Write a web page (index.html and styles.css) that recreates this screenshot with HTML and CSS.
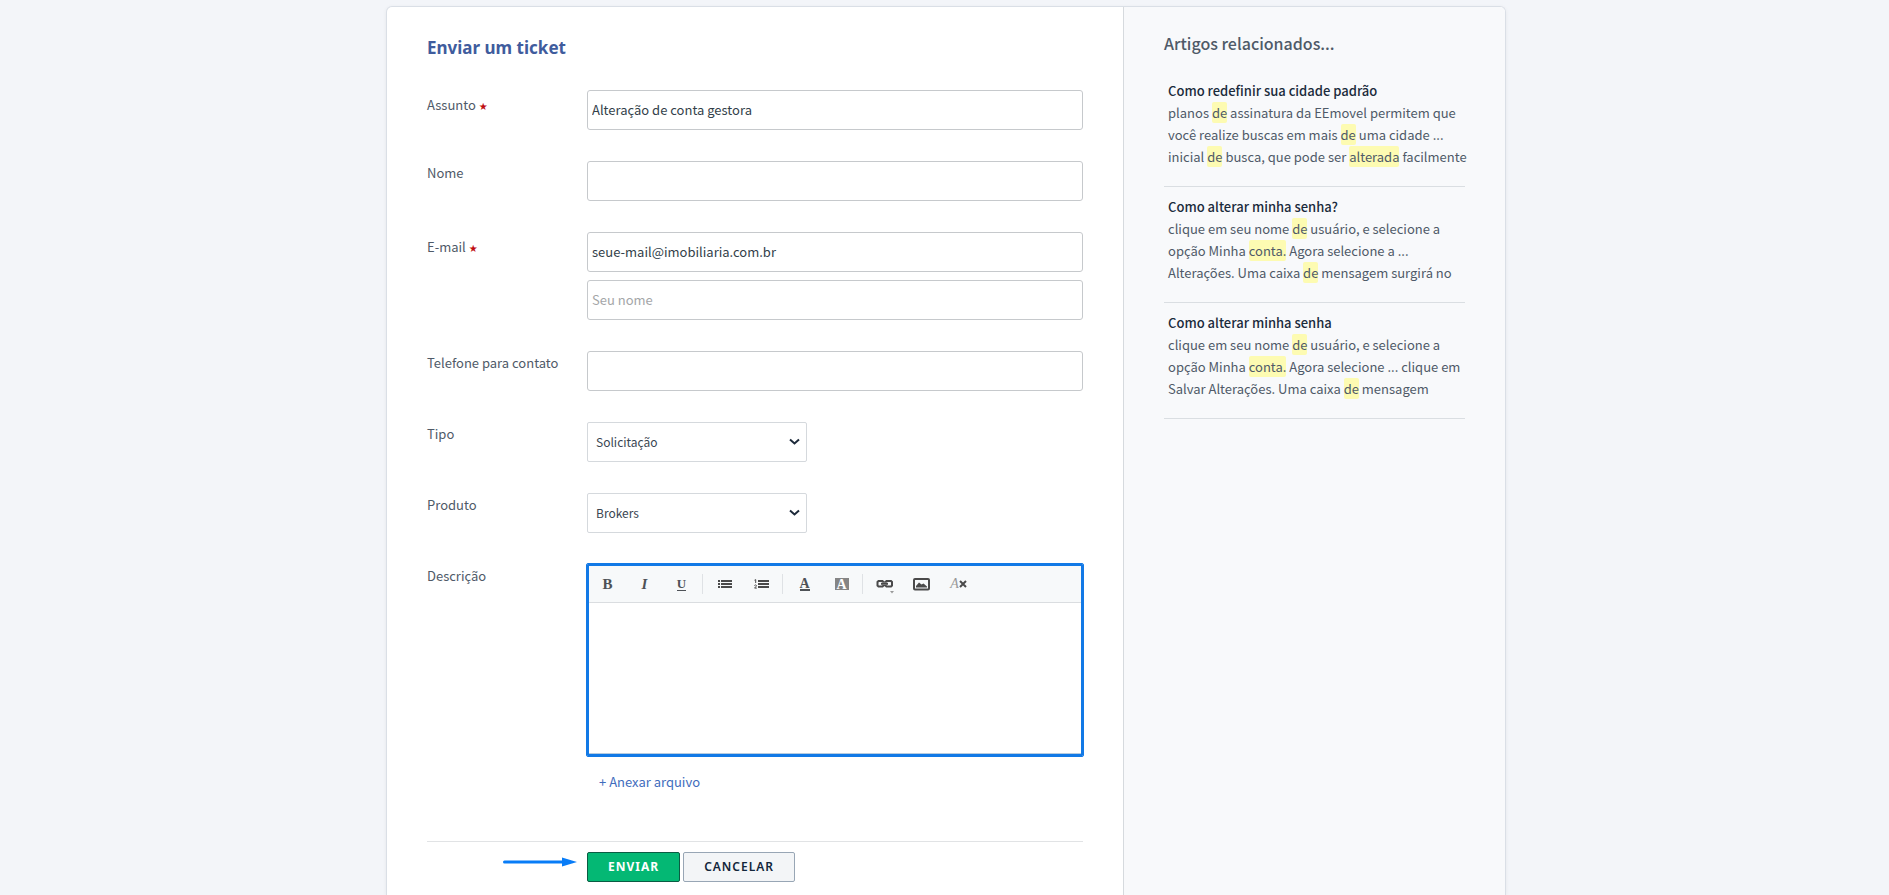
FILE: index.html
```html
<!DOCTYPE html>
<html lang="pt-BR">
<head>
<meta charset="utf-8">
<title>Enviar um ticket</title>
<meta name="viewport" content="width=device-width, initial-scale=1">
<link rel="stylesheet" href="styles.css">
</head>
<body>
<div class="card">
  <main class="main">
    <h1 class="title">Enviar um ticket</h1>
    <form class="form">
      <div class="row">
        <label class="label label-required" for="subject">Assunto <span class="star">★</span></label>
        <input class="input" id="subject" type="text" value="Alteração de conta gestora">
      </div>
      <div class="row">
        <label class="label" for="name">Nome</label>
        <input class="input" id="name" type="text">
      </div>
      <div class="row">
        <label class="label label-required" for="email">E-mail <span class="star">★</span></label>
        <div class="stack">
          <input class="input" id="email" type="text" value="seue-mail@imobiliaria.com.br">
          <input class="input" type="text" placeholder="Seu nome" aria-label="Seu nome">
        </div>
      </div>
      <div class="row">
        <label class="label" for="phone">Telefone para contato</label>
        <input class="input" id="phone" type="text">
      </div>
      <div class="row">
        <label class="label" for="type">Tipo</label>
        <div class="select-box">
          <select class="select" id="type"><option>Solicitação</option></select>
          <svg class="chevron" width="11" height="8" viewBox="0 0 11 8"><path d="M1 1.5 5.500 5.500 10 1.5"/></svg>
        </div>
      </div>
      <div class="row">
        <label class="label" for="product">Produto</label>
        <div class="select-box">
          <select class="select" id="product"><option>Brokers</option></select>
          <svg class="chevron" width="11" height="8" viewBox="0 0 11 8"><path d="M1 1.5 5.500 5.500 10 1.5"/></svg>
        </div>
      </div>
      <div class="row">
        <label class="label" for="description">Descrição</label>
        <div class="description">
          <div class="editor">
            <div class="toolbar">
              <button class="tool tool-bold" type="button">B</button>
              <button class="tool tool-italic" type="button">I</button>
              <button class="tool tool-underline" type="button"><span class="underlined">U</span></button>
              <span class="divider"></span>
              <button class="tool" type="button" aria-label="Lista"><svg width="14" height="10" viewBox="0 0 14 10"><path d="M0 1h2v2H0zM0 4h2v2H0zM0 7h2v2H0zM3 1h11v2H3zM3 4h11v2H3zM3 7h11v2H3z"/></svg></button>
              <button class="tool" type="button" aria-label="Lista numerada"><svg width="16" height="10" viewBox="0 0 16 10"><path d="M4 1h11v2H4zM4 4h11v2H4zM4 7h11v2H4z"/><path class="thin" d="M.5 1.2 1.7.6V4M.4 6.5Q1.5 5.4 2.4 6.4 2.6 7 .6 9.1H2.8"/></svg></button>
              <span class="divider"></span>
              <button class="tool" type="button"><span class="text-color">A</span></button>
              <button class="tool" type="button"><span class="back-color">A</span></button>
              <span class="divider"></span>
              <button class="tool" type="button" aria-label="Link"><svg width="18" height="20" viewBox="0 0 18 20"><path class="line" d="M7.500 8.500V8L6.500 7H2.500L1.500 8v3.500l1 1h4l1-1V11M9.500 8.500V8l1-1h4.500l1 1v3.500l-1 1H10.500l-1-1V11M5 9.800h7"/><path class="light" d="M14 17h4l-2 2.500z"/></svg></button>
              <button class="tool" type="button" aria-label="Imagem"><svg width="17" height="13" viewBox="0 0 17 13"><rect class="line" x="1" y="1" width="15" height="10.500" rx="1"/><path d="M3 9.500V8l3-3.500 2.500 2 2-1L14 8.500v1z"/></svg></button>
              <button class="tool tool-clear" type="button"><span class="clear-letter">A</span><svg width="8" height="8" viewBox="0 0 8 8"><path class="cross" d="M1 1 7 7M7 1 1 7"/></svg></button>
            </div>
            <textarea class="textarea" id="description"></textarea>
          </div>
          <a class="attach" href="#">+ Anexar arquivo</a>
        </div>
      </div>
      <div class="actions">
        <div class="pointer"><svg width="74" height="10" viewBox="0 0 74 10"><path d="M1.500 3.500H59V.5L74 5 59 9.500V6.500H1.500a1.500 1.500 0 0 1 0-3z"/></svg></div>
        <button class="button button-primary" type="submit">ENVIAR</button>
        <button class="button" type="button">CANCELAR</button>
      </div>
    </form>
  </main>
  <aside class="side">
    <h2 class="side-title">Artigos relacionados...</h2>
    <article class="article">
      <h3 class="article-title">Como redefinir sua cidade padrão</h3>
      <p class="text">planos <mark>de</mark> assinatura da EEmovel permitem que<br>você realize buscas em mais <mark>de</mark> uma cidade ...<br>inicial <mark>de</mark> busca, que pode ser <mark>alterada</mark> facilmente</p>
    </article>
    <article class="article">
      <h3 class="article-title">Como alterar minha senha?</h3>
      <p class="text">clique em seu nome <mark>de</mark> usuário, e selecione a<br>opção Minha <mark>conta.</mark> Agora selecione a ...<br>Alterações. Uma caixa <mark>de</mark> mensagem surgirá no</p>
    </article>
    <article class="article">
      <h3 class="article-title">Como alterar minha senha</h3>
      <p class="text">clique em seu nome <mark>de</mark> usuário, e selecione a<br>opção Minha <mark>conta.</mark> Agora selecione ... clique em<br>Salvar Alterações. Uma caixa <mark>de</mark> mensagem</p>
    </article>
  </aside>
</div>
</body>
</html>
```
FILE: styles.css
```css
* { box-sizing: border-box; }

body {
  margin: 0;
  min-height: 100vh;
  padding: 6px 0 0 3px;
  display: flex;
  justify-content: center;
  background: #f3f5f9;
  color: #4f5a68;
  font-family: "Noto Sans CJK SC", "Noto Sans", sans-serif;
  font-size: 13px;
  line-height: 22px;
}

h1, h2, h3, p { margin: 0; }
button, input, select, textarea { font: inherit; color: inherit; }

.card {
  width: 100%;
  max-width: 1120px;
  display: flex;
  background: #fff;
  border: 1px solid #dadfe6;
  border-bottom: 0;
  border-radius: 6px 6px 0 0;
  box-shadow: 0 1px 4px rgba(0, 0, 0, 0.06);
  overflow: hidden;
}

.main { flex: 1; min-width: 0; padding: 28px 40px 12px; }

.title {
  margin-bottom: 29px;
  color: #3f5c9d;
  font-family: "Noto Sans", sans-serif;
  font-size: 17px;
  font-weight: 700;
  line-height: 26px;
}

.form { display: flex; flex-direction: column; gap: 31px; }
.row { display: grid; grid-template-columns: 160px 1fr; }
.label { padding-top: 1px; }
.label-required { padding-top: 4px; }
.star { color: #c00d12; font-family: "DejaVu Sans", sans-serif; font-size: 10px; }

.input {
  width: 100%;
  height: 40px;
  padding: 0 4px 2px;
  border: 1px solid #c6c9cc;
  border-radius: 3px;
  background: #fff;
  color: #333f4a;
}
.input::placeholder { color: #a4a6a8; opacity: 1; }
.stack { display: flex; flex-direction: column; gap: 8px; }

.select-box { position: relative; width: 220px; }
.select {
  display: block;
  width: 100%;
  height: 40px;
  padding: 0 8px 1px;
  border: 1px solid #d5d9dd;
  border-radius: 2px;
  background: #fff;
  appearance: none;
  color: #3a4652;
  font-size: 12px;
}
.chevron {
  position: absolute;
  top: 16px;
  right: 7px;
  fill: none;
  stroke: #1d2a3a;
  stroke-width: 2;
  pointer-events: none;
}

.description { display: flex; flex-direction: column; align-items: flex-start; }
.editor { width: 100%; border: 2px solid #1279e6; outline: 1px solid #1279e6; border-radius: 1px; }
.toolbar {
  height: 37px;
  display: flex;
  align-items: center;
  background: #f7f9fa;
  border-bottom: 1px solid #dadde0;
}
.tool {
  width: 37px;
  height: 30px;
  padding: 0;
  display: flex;
  align-items: center;
  justify-content: center;
  border: 0;
  background: none;
  color: #4e5257;
  font-family: "Liberation Serif", serif;
  font-size: 15px;
  line-height: 16px;
}
.tool svg { fill: #4a4a4a; }
.tool .line, .tool .thin, .tool .cross { fill: none; stroke: #4a4a4a; stroke-width: 2; }
.tool .thin { stroke-width: 1; }
.tool .light { fill: #999; }
.tool-bold { font-weight: 700; }
.tool-italic { font-weight: 700; font-style: italic; }
.underlined { border-bottom: 1px solid #4e5257; line-height: 12px; font-size: 13px; font-weight: 700; }
.text-color { width: 10px; border-bottom: 2px solid #4e5257; font-size: 14px; font-weight: 700; line-height: 11px; }
.back-color { width: 14px; height: 12px; background: #858585; color: #fff; font-size: 14px; font-weight: 700; line-height: 13px; }
.clear-letter { color: #999; font-size: 14px; font-style: italic; }
.divider { width: 1px; height: 20px; margin: 0 3px 0 2px; background: #dfe2e5; }
.textarea {
  display: block;
  width: 100%;
  height: 151px;
  padding: 8px;
  border: 0;
  border-bottom: 1px solid #b5cbe0;
  outline: 0;
  resize: none;
}
.attach { margin: 15px 0 0 12px; color: #3f6dbd; text-decoration: none; }

.actions {
  display: flex;
  gap: 3px;
  margin-top: 17px;
  padding-top: 10px;
  border-top: 1px solid #e1e3e5;
}
.pointer { width: 157px; padding: 5px 7px 0 0; display: flex; justify-content: flex-end; }
.pointer svg { fill: #087cf7; }
.button {
  height: 30px;
  padding: 0 20px;
  border: 1px solid #98a6b5;
  border-radius: 2px;
  background: #f3f5f7;
  color: #12263b;
  font-family: "Noto Sans", sans-serif;
  font-size: 12px;
  font-weight: 600;
  letter-spacing: 1px;
}
.button-primary { background: #04b874; border-color: #0a5c43; color: #fff; font-weight: 700; }

.side {
  width: 382px;
  padding: 24px 40px 0;
  background: #f8f9fb;
  border-left: 1px solid #d6dade;
}
.side-title { margin-bottom: 25px; font-size: 16px; font-weight: 500; line-height: 24px; }
.article { padding: 0 4px 18px; margin-bottom: 9px; border-bottom: 1px solid #dadee2; }
.article-title { color: #1b2b3b; font-size: 13px; font-weight: 500; line-height: 22px; }
.text { white-space: nowrap; }
mark { padding: 1px 0; background: #fdfbb2; color: inherit; border-radius: 2px; }
```
